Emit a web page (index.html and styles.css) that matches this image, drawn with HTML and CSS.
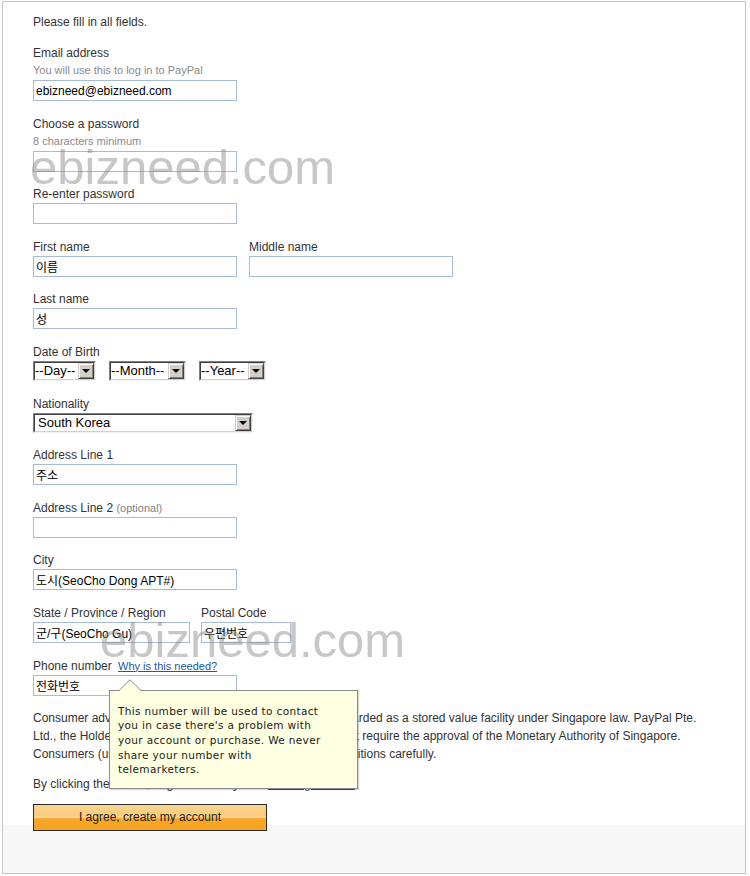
FILE: index.html
```html
<!DOCTYPE html>
<html>
<head>
<meta charset="utf-8">
<link rel="stylesheet" href="styles.css">
</head>
<body>
<div class="frame">
  <div class="form">
    <p class="intro">Please fill in all fields.</p>

    <div class="field field-first">
      <span class="lbl">Email address</span>
      <div class="hint">You will use this to log in to PayPal</div>
      <input class="txt" type="text" value="ebizneed@ebizneed.com">
    </div>

    <div class="field">
      <span class="lbl">Choose a password</span>
      <div class="hint">8 characters minimum</div>
      <input class="txt" type="password" value="">
    </div>

    <div class="field">
      <span class="lbl">Re-enter password</span>
      <input class="txt" type="password" value="">
    </div>

    <div class="row">
      <div class="field">
        <span class="lbl">First name</span>
        <input class="txt" type="text" value="이름">
      </div>
      <div class="field">
        <span class="lbl">Middle name</span>
        <input class="txt" type="text" value="">
      </div>
    </div>

    <div class="field">
      <span class="lbl">Last name</span>
      <input class="txt" type="text" value="성">
    </div>

    <div class="field">
      <span class="lbl">Date of Birth</span>
      <div class="sel-row">
        <div class="sel sel-day"><div class="sel-in"><span class="sel-text">--Day--</span><span class="sel-btn"><span class="tri"></span></span></div></div>
        <div class="sel sel-month"><div class="sel-in"><span class="sel-text">--Month--</span><span class="sel-btn"><span class="tri"></span></span></div></div>
        <div class="sel sel-year"><div class="sel-in"><span class="sel-text">--Year--</span><span class="sel-btn"><span class="tri"></span></span></div></div>
      </div>
    </div>

    <div class="field">
      <span class="lbl">Nationality</span>
      <div class="sel-row">
        <div class="sel sel-nation"><div class="sel-in"><span class="sel-text">South Korea</span><span class="sel-btn"><span class="tri"></span></span></div></div>
      </div>
    </div>

    <div class="field">
      <span class="lbl">Address Line 1</span>
      <input class="txt" type="text" value="주소">
    </div>

    <div class="field">
      <span class="lbl">Address Line 2 <span class="opt">(optional)</span></span>
      <input class="txt" type="text" value="">
    </div>

    <div class="field">
      <span class="lbl">City</span>
      <input class="txt" type="text" value="도시(SeoCho Dong APT#)">
    </div>

    <div class="row row-state">
      <div class="field">
        <span class="lbl">State / Province / Region</span>
        <input class="txt txt-state" type="text" value="군/구(SeoCho Gu)">
      </div>
      <div class="field">
        <span class="lbl">Postal Code</span>
        <input class="txt txt-postal" type="text" value="우편번호">
      </div>
    </div>

    <div class="field field-phone">
      <span class="lbl">Phone number <a class="why" href="#">Why is this needed?</a></span>
      <input class="txt" type="text" value="전화번호">
      <div class="tip">
        <svg class="tip-arrow" width="24" height="12" viewBox="0 0 24 12">
          <polygon points="0,12 11,1 22,12" fill="#ffffe1"/>
          <polyline points="0,11.5 11,0.8 22,11.5" fill="none" stroke="#8a8a8a" stroke-width="1"/>
        </svg>
        This number will be used to contact<br>you in case there's a problem with<br>your account or purchase. We never<br>share your number with<br>telemarketers.
      </div>
    </div>

    <p class="advisory">Consumer advisory - PayPal's online payment service is regarded as a stored value facility under Singapore law. PayPal Pte.<br>Ltd., the Holder of the PayPal™ stored value facility, does not require the approval of the Monetary Authority of Singapore.<br>Consumers (users) are advised to read all its terms and conditions carefully.</p>

    <p class="agree">By clicking the button, I agree with PayPal's <a href="#">User Agreement</a></p>

    <button class="btn" type="button">I agree, create my account</button>
  </div>
  <div class="footer"></div>

  <div class="watermark wm1">ebizneed.com</div>
  <div class="watermark wm2">ebizneed.com</div>
</div>
</body>
</html>
```
FILE: styles.css
```css
* { box-sizing: border-box; }
html, body { margin: 0; padding: 0; }
body {
  font-family: "Liberation Sans", Arial, "Noto Sans CJK KR", sans-serif;
  font-size: 12px;
  color: #333;
  background: #fff;
}
.frame {
  position: relative;
  margin: 1px 4px 2px 2px;
  height: 873px;
  border: 1px solid #c6c6c6;
  display: flex;
  flex-direction: column;
}
.form {
  flex: 1 1 auto;
  min-height: 0;
  padding: 13px 0 0 30px;
}
.intro { margin: 0; line-height: 15px; }
.field { margin-top: 14.6px; }
.field-first { margin-top: 15px; }
.row { display: flex; gap: 12px; }
.row-state { gap: 11px; }
.lbl { display: block; line-height: 16px; color: #333; }
.opt { font-size: 11px; color: #808080; }
.hint {
  font-size: 11px;
  color: #8a8a8a;
  line-height: 15px;
  margin-top: 2px;
}
.txt {
  display: block;
  width: 204px;
  height: 21px;
  margin: 1px 0 0 0;
  padding: 0 2px;
  border: 1px solid #a6bcd4;
  font-family: "Liberation Sans", Arial, "Noto Sans CJK KR", sans-serif;
  font-size: 12px;
  color: #000;
  background: #fff;
  outline: none;
}
.hint + .txt { margin-top: 2px; }
.txt-state { width: 157px; }
.txt-postal { width: 90px; }

.sel-row { display: flex; gap: 13px; margin-top: 1px; }
.sel {
  height: 20px;
  border: 1px solid;
  border-color: #808080 #f4f4f4 #f4f4f4 #808080;
  background: #fff;
  display: flex;
}
.sel-in {
  flex: 1;
  display: flex;
  border: 1px solid;
  border-color: #404040 #d4d0c8 #d4d0c8 #404040;
}
.sel-text {
  flex: 1;
  font-size: 13px;
  line-height: 16px;
  color: #000;
  white-space: nowrap;
  overflow: hidden;
}
.sel-day { width: 63px; }
.sel-month { width: 77px; }
.sel-year { width: 67px; }
.sel-nation { width: 220px; }
.sel-nation .sel-text { padding-left: 3px; }
.sel-btn {
  width: 16px;
  height: 16px;
  background: #d4d0c8;
  border: 1px solid;
  border-color: #d4d0c8 #404040 #404040 #d4d0c8;
  box-shadow: inset 1px 1px 0 #fff, inset -1px -1px 0 #808080;
  display: flex;
  align-items: center;
  justify-content: center;
}
.tri {
  width: 0;
  height: 0;
  border-left: 4px solid transparent;
  border-right: 4px solid transparent;
  border-top: 4px solid #000;
  margin-top: 1px;
}

.field-phone { position: relative; }
.why {
  font-size: 11px;
  color: #1f56a3;
  text-decoration: underline;
  margin-left: 3px;
}
.tip {
  position: absolute;
  left: 76px;
  top: 32px;
  width: 249px;
  height: 99px;
  z-index: 5;
  background: #ffffe1;
  border: 1px solid #8a8a8a;
  box-shadow: 1px 1px 1px rgba(0, 0, 0, 0.15);
  padding: 13px 4px 0 8px;
  font-family: "DejaVu Sans", Verdana, sans-serif;
  font-size: 10.5px;
  letter-spacing: 0.35px;
  line-height: 14.7px;
  color: #1a1a1a;
  white-space: nowrap;
}
.tip-arrow {
  position: absolute;
  left: 9px;
  top: -12px;
  display: block;
}

.advisory {
  margin: 13px 0 0 0;
  line-height: 18px;
  color: #333;
  white-space: nowrap;
}
.agree {
  margin: 12px 0 0 0;
  line-height: 18px;
  color: #333;
}
.agree a { color: #1f56a3; text-decoration: underline; }

.btn {
  position: relative;
  z-index: 2;
  display: block;
  margin-top: 11px;
  width: 234px;
  height: 27px;
  padding: 0;
  border: 1px solid #2a2a2a;
  background: linear-gradient(to bottom, #fbd48e 0, #f9cc7e 45%, #fde0a6 48%, #f8a62a 55%, #f7a420 100%);
  font-family: "Liberation Sans", Arial, sans-serif;
  font-size: 12px;
  color: #222;
  text-align: center;
}
.footer {
  flex: 0 0 48px;
  height: 48px;
  background: #f7f7f7;
}

.watermark {
  position: absolute;
  z-index: 4;
  pointer-events: none;
  font-family: "Liberation Sans", Arial, sans-serif;
  font-size: 49px;
  line-height: 1;
  color: rgba(128, 128, 128, 0.44);
  white-space: nowrap;
}
.wm1 { left: 27px; top: 141px; }
.wm2 { left: 97px; top: 614px; }
```
